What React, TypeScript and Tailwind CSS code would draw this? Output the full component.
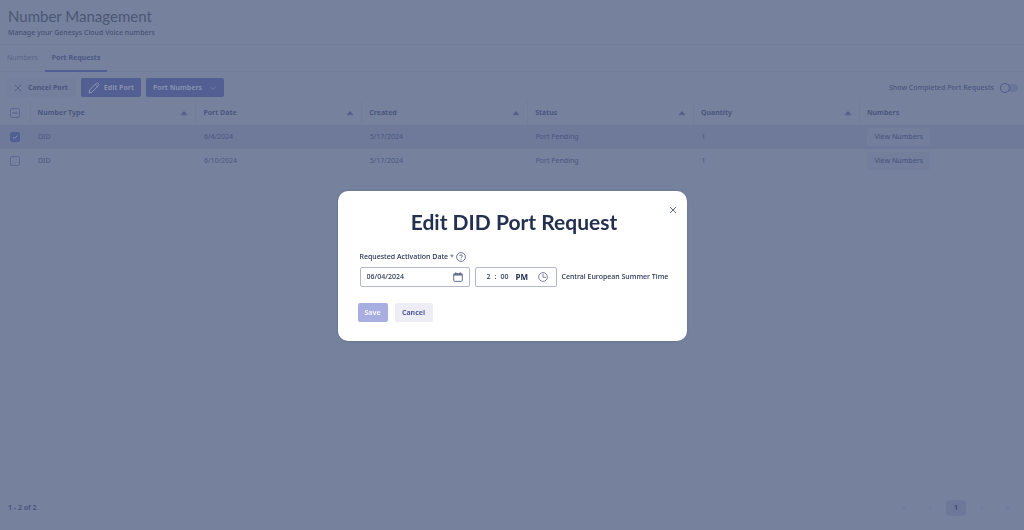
import { useState } from "react";
import type { ReactNode } from "react";

const columns = ["Number Type", "Port Date", "Created", "Status", "Quantity"];

const requests = [
  { id: "a", type: "DID", portDate: "6/4/2024", created: "5/17/2024", status: "Port Pending", quantity: 1 },
  { id: "b", type: "DID", portDate: "6/10/2024", created: "5/17/2024", status: "Port Pending", quantity: 1 },
];

function CheckBox(props: { label: string; checked: boolean; mixed?: boolean; onChange: () => void }) {
  return (
    <label className="grid w-[10px] h-[10px] mx-auto">
      <input
        type="checkbox"
        aria-label={props.label}
        checked={props.checked}
        onChange={props.onChange}
        className="col-start-1 row-start-1 w-[10px] h-[10px] appearance-none rounded-xs border border-[#5d6891] checked:border-[#525f92] checked:bg-[#525f92]"
      />
      <svg viewBox="0 0 10 10" className="pointer-events-none col-start-1 row-start-1 w-[10px] h-[10px]" fill="none">
        {props.mixed && <path d="M2.5 5h5" stroke="#525f92" />}
        {props.checked && <path d="M3 5.2l1.5 1.3L7.2 3.7" stroke="#8a95b1" />}
      </svg>
    </label>
  );
}

function Triangle() {
  return (
    <svg viewBox="0 0 8 6" className="w-2 h-[6px]">
      <path d="M4 1.4L6.9 4.8H1.1z" fill="#525d8b" stroke="#525d8b" strokeWidth=".6" strokeLinejoin="round" />
    </svg>
  );
}

function PageButton({ label, children }: { label: string; children: ReactNode }) {
  return (
    <button type="button" aria-label={label} className="grid w-5 h-4 place-items-center text-[#6c7799]">
      <svg viewBox="0 0 8 8" className="w-[6px] h-[6px]" fill="none" stroke="currentColor" strokeWidth="1.3">
        {children}
      </svg>
    </button>
  );
}

function EditDialog() {
  const [date, setDate] = useState("06/04/2024");
  const [hour, setHour] = useState("2");
  const [minute, setMinute] = useState("00");
  return (
    <div className="fixed inset-0 flex items-center justify-center">
      <div
        role="dialog"
        aria-modal="true"
        aria-labelledby="dialog-title"
        className="relative mt-[2px] w-[349px] rounded-[10px] bg-white pt-[17px] pr-4 pb-[19px] pl-5 text-[7px] leading-[10px] text-[#23304f] shadow-[0_0_3px_#626e8d]"
      >
        <button type="button" aria-label="Close" className="absolute top-[14px] right-[9px] grid w-[10px] h-[10px] place-items-center">
          <svg viewBox="0 0 8 8" className="w-2 h-2" stroke="#5c6786" strokeWidth="1">
            <path d="M1 1l6 6M7 1L1 7" />
          </svg>
        </button>
        <h2 id="dialog-title" className="text-center font-['Lato',sans-serif] text-[21px] leading-[28px] font-bold">
          Edit DID Port Request
        </h2>
        <div className="mt-4 ml-[2px] flex items-center gap-[2px]">
          <label htmlFor="date" className="font-medium">
            Requested Activation Date <span className="text-[#68718c]">*</span>
          </label>
          <svg viewBox="0 0 10 10" className="w-[10px] h-[10px]" fill="none" stroke="#4a5676" strokeWidth=".8">
            <circle cx="5" cy="5" r="4.4" />
            <path d="M3.7 4.1c0-1.8 2.7-1.7 2.7 0C6.4 5 5 5 5 6.1M5 6.8v.9" />
          </svg>
        </div>
        <div className="mt-[5px] ml-[2px] flex items-center gap-[5px]">
          <div className="flex h-5 w-[110px] shrink-0 items-center rounded-xs border border-[#b4b7c9] pr-[6px] pl-[6px] font-medium">
            <input
              id="date"
              value={date}
              onChange={(e) => setDate(e.target.value)}
              className="min-w-0 flex-1 bg-transparent outline-none"
            />
            <svg viewBox="0 0 10 10" className="w-[10px] h-[10px]" fill="none" stroke="#56617f" strokeWidth=".9">
              <rect x=".7" y="1.6" width="8.6" height="7.8" rx="1" />
              <path d="M.7 2.8h8.6" strokeWidth="1.4" />
              <path d="M2.8.2v2M7.2.2v2" />
            </svg>
          </div>
          <div className="flex h-5 w-[82px] shrink-0 items-center rounded-xs border border-[#b4b7c9] pr-[8px] pl-[9px] font-medium">
            <input
              aria-label="Hour"
              value={hour}
              onChange={(e) => setHour(e.target.value)}
              className="w-2 bg-transparent text-center outline-none"
            />
            <span className="w-[6px] text-center">:</span>
            <input
              aria-label="Minute"
              value={minute}
              onChange={(e) => setMinute(e.target.value)}
              className="w-3 bg-transparent text-center outline-none"
            />
            <select
              aria-label="AM or PM"
              defaultValue="PM"
              className="ml-[5px] w-4 appearance-none bg-transparent text-[8px] font-bold outline-none"
            >
              <option>AM</option>
              <option>PM</option>
            </select>
            <svg viewBox="0 0 10 10" className="ml-auto w-[10px] h-[10px]" fill="none" stroke="#5c6786" strokeWidth=".8">
              <circle cx="5" cy="5" r="4.4" />
              <path d="M5 1.8V5.3h3" />
            </svg>
          </div>
          <span className="whitespace-nowrap font-medium">Central European Summer Time</span>
        </div>
        <div className="mt-4 flex gap-[7px] font-bold">
          <button type="button" disabled className="h-[19px] w-[30px] rounded-xs bg-[#a9aee0] text-[#f1f2fb]">
            Save
          </button>
          <button type="button" className="h-[19px] w-[38px] rounded-xs bg-[#edeef5] text-[#525aa0]">
            Cancel
          </button>
        </div>
      </div>
    </div>
  );
}

export default function App() {
  const [selected, setSelected] = useState<string[]>(["a"]);
  const toggle = (id: string) =>
    setSelected((s) => (s.includes(id) ? s.filter((v) => v !== id) : [...s, id]));
  const all = selected.length === requests.length;

  return (
    <div className="flex min-h-screen flex-col bg-[#76829d] font-['Noto_Sans',sans-serif] text-[7px] leading-[10px] text-[#4a567f]">
      <header className="border-b border-[#727d9a] px-2 pt-[7px] pb-[6px]">
        <h1 className="font-['Lato',sans-serif] text-[15px] leading-[18px] text-[#4b5675]">Number Management</h1>
        <p className="mt-[3px] font-medium text-[#465174]">Manage your Genesys Cloud Voice numbers</p>
      </header>
      <nav className="flex h-[27px] border-b border-[#727d9a]">
        <a href="#numbers" className="flex items-center px-[7px] text-[#596589]">
          Numbers
        </a>
        <a href="#requests" className="-mb-px flex items-center border-b-2 border-[#525f92] px-[7px] pt-px font-bold text-[#4c5885]">
          Port Requests
        </a>
      </nav>
      <div className="flex items-center gap-[5px] px-[6px] pt-[6px] pb-1 font-bold">
        <button type="button" className="flex h-[19px] items-center gap-[6px] rounded-xs bg-[#747f9d] px-2">
          <svg viewBox="0 0 8 8" className="w-2 h-2" stroke="#4f5b88" strokeWidth=".8">
            <path d="M1 1l6 6M7 1L1 7" />
          </svg>
          Cancel Port
        </button>
        <button type="button" className="flex h-[19px] items-center gap-1 rounded-xs bg-[#525f92] px-[7px] text-[#8590af]">
          <svg viewBox="0 0 12 12" className="w-3 h-3" fill="none" stroke="#919bb6" strokeWidth=".9" strokeLinejoin="round">
            <path d="M1 11l.8-3.2L8.5 1.1c.9-.9 3.1 1.1 2.2 2.2L4 10.2zM7.2 2.4l2.3 2.3" />
          </svg>
          Edit Port
        </button>
        <button type="button" className="flex h-[19px] items-center gap-[7px] rounded-xs bg-[#525f92] px-[7px] text-[#8590af]">
          Port Numbers
          <svg viewBox="0 0 8 8" className="w-2 h-2" fill="none" stroke="#7480a5" strokeWidth=".8">
            <path d="M1.5 3L4 5.4 6.5 3" />
          </svg>
        </button>
        <label className="ml-auto flex items-center gap-[6px] font-medium">
          Show Completed Port Requests
          <span className="grid items-center">
            <input
              type="checkbox"
              role="switch"
              className="col-start-1 row-start-1 h-2 w-[18px] appearance-none rounded-full bg-[#6a7698]"
            />
            <span className="pointer-events-none col-start-1 row-start-1 w-[10px] h-[10px] rounded-full border border-[#4f5b8b] bg-[#76829d]" />
          </span>
        </label>
      </div>
      <table className="w-full table-fixed text-left">
        <colgroup>
          <col className="w-[30px]" />
          {columns.map((c) => (
            <col key={c} className="w-[16.2%]" />
          ))}
          <col />
        </colgroup>
        <thead>
          <tr className="h-6">
            <th className="p-0">
              <CheckBox
                label="Select all"
                checked={all}
                mixed={selected.length > 0 && !all}
                onChange={() => setSelected(all ? [] : requests.map((r) => r.id))}
              />
            </th>
            {columns.map((c) => (
              <th key={c} className="border-l border-[#727d9a] px-[7px] py-0">
                <span className="flex items-center justify-between">
                  {c}
                  <Triangle />
                </span>
              </th>
            ))}
            <th className="border-l border-[#727d9a] px-[7px] py-0">Numbers</th>
          </tr>
        </thead>
        <tbody>
          {requests.map((r) => (
            <tr key={r.id} className={selected.includes(r.id) ? "h-6 bg-[#6f7a9a]" : "h-6"}>
              <td className="p-0">
                <CheckBox label={"Select " + r.portDate} checked={selected.includes(r.id)} onChange={() => toggle(r.id)} />
              </td>
              <td className="px-2 py-0">{r.type}</td>
              <td className="px-2 py-0">{r.portDate}</td>
              <td className="px-2 py-0">{r.created}</td>
              <td className="px-2 py-0">{r.status}</td>
              <td className="px-2 py-0">{r.quantity}</td>
              <td className="px-2 py-0">
                <button type="button" className="h-[18px] rounded-xs bg-[#737e9c] px-[7px] font-medium">
                  View Numbers
                </button>
              </td>
            </tr>
          ))}
        </tbody>
      </table>
      <footer className="mt-auto flex items-center justify-between pt-2 pr-[6px] pb-[14px] pl-2 font-bold">
        <span>1 - 2 of 2</span>
        <nav aria-label="Pages" className="flex items-center gap-[6px]">
          <PageButton label="First page">
            <path d="M4 1.5L1.5 4 4 6.5M7 1.5L4.5 4 7 6.5" />
          </PageButton>
          <PageButton label="Previous page">
            <path d="M5 1.5L2.5 4 5 6.5" />
          </PageButton>
          <button type="button" className="w-5 h-4 rounded-sm bg-[#6c779a] text-[#414c72]">
            1
          </button>
          <PageButton label="Next page">
            <path d="M3 1.5L5.5 4 3 6.5" />
          </PageButton>
          <PageButton label="Last page">
            <path d="M1 1.5L3.5 4 1 6.5M4 1.5L6.5 4 4 6.5" />
          </PageButton>
        </nav>
      </footer>
      <EditDialog />
    </div>
  );
}
